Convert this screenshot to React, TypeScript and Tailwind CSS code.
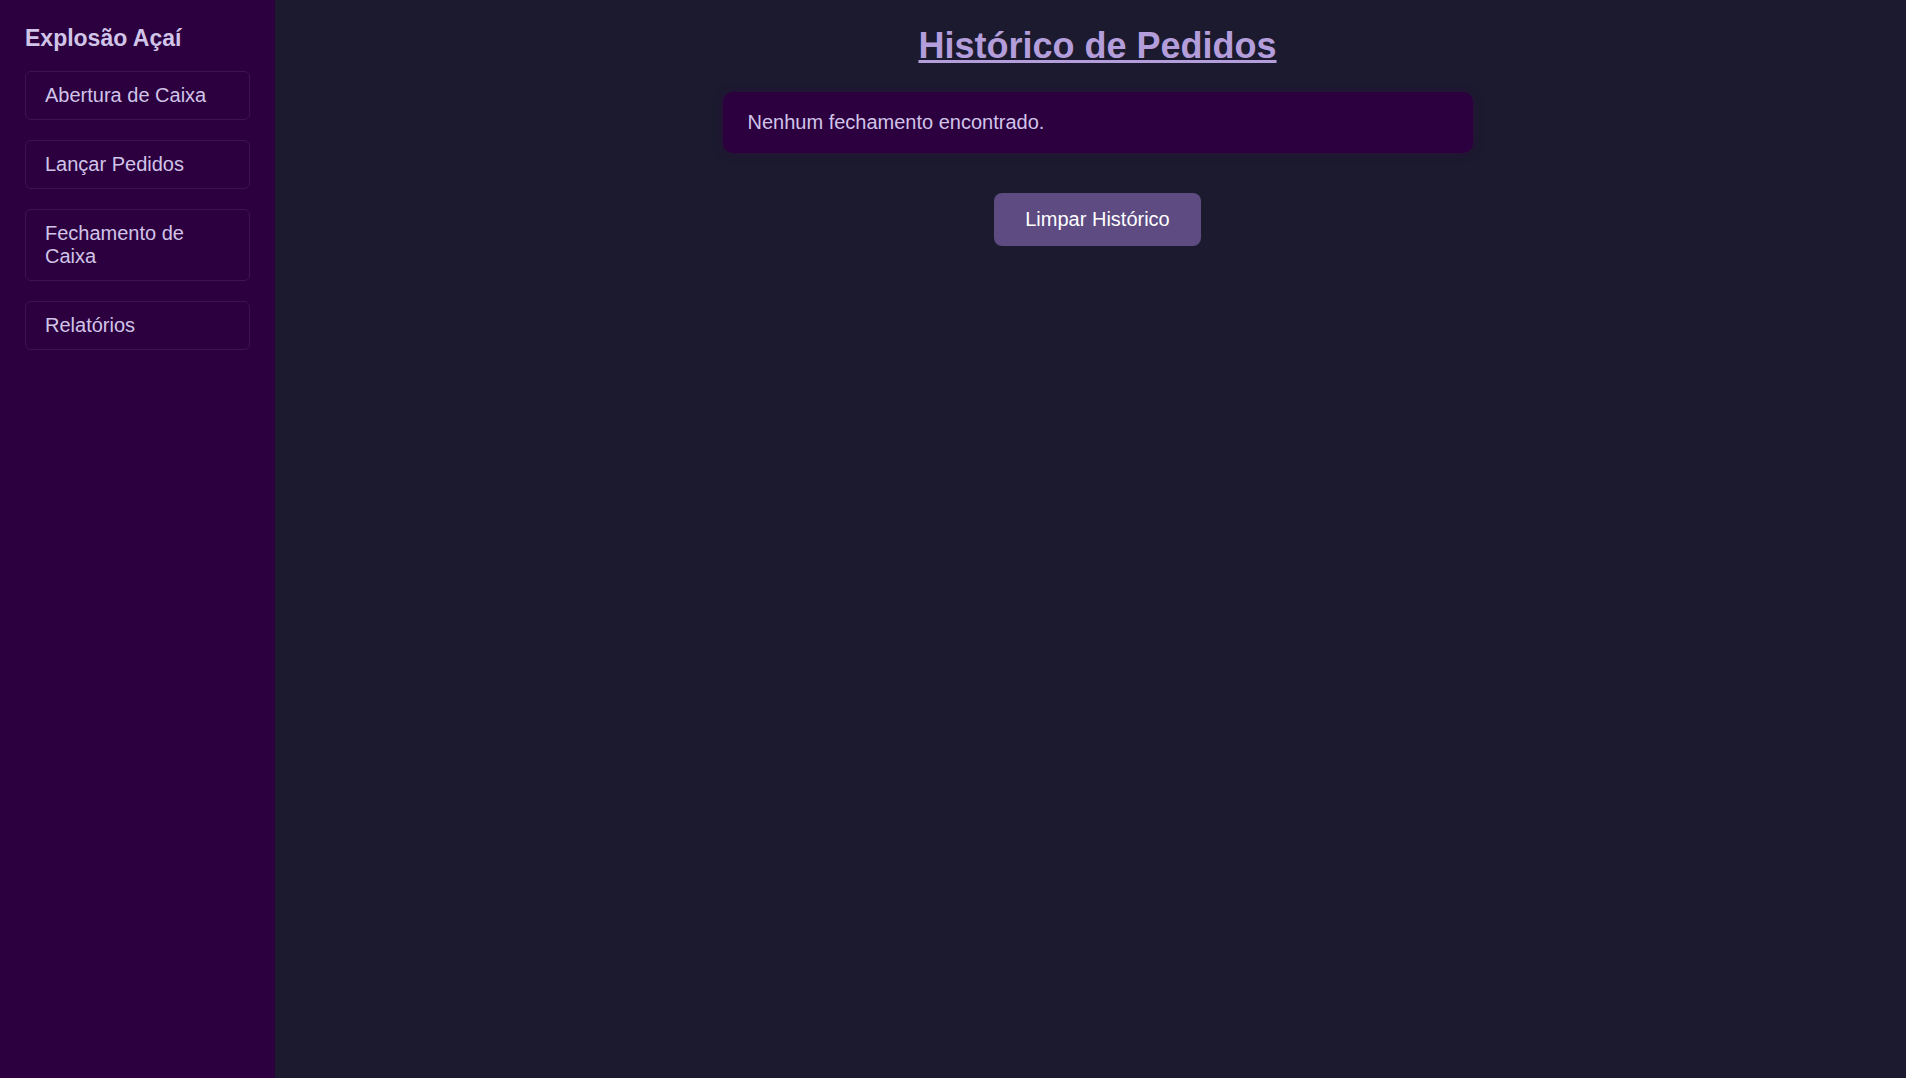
const navItems = ["Abertura de Caixa", "Lançar Pedidos", "Fechamento de Caixa", "Relatórios"];

export default function App() {
  return (
    <div
      className="flex h-screen w-full overflow-hidden"
      style={{ fontFamily: '"Liberation Sans", Arial, sans-serif' }}
    >
      <aside className="w-[275px] shrink-0 bg-[#2c003e] px-[25px] pt-[25px]">
        <h2 className="mb-[19px] text-[23px] font-bold leading-[27px] text-[#d1c4e9]">
          Explosão Açaí
        </h2>
        <nav className="flex flex-col gap-[20px]">
          {navItems.map((item) => (
            <a
              key={item}
              href="#"
              className="block rounded-[6px] border border-[#3b1450] px-[19px] py-[12px] text-[20px] leading-[23px] text-[#d1c4e9]"
            >
              {item}
            </a>
          ))}
        </nav>
      </aside>
      <main className="flex flex-1 flex-col items-center bg-[#1b1a2e] pl-[34px] pr-[20px] pt-[25px]">
        <h1 className="mb-[26px] text-[36px] font-bold leading-[41px] text-[#b39ddb] underline">
          Histórico de Pedidos
        </h1>
        <div className="w-[750px] rounded-[10px] bg-[#2c003e] px-[25px] py-[19px] text-[20px] leading-[23px] text-[#d1c4e9] shadow-[0_0_8px_rgba(60,0,80,0.5)]">
          Nenhum fechamento encontrado.
        </div>
        <button className="mt-[40px] rounded-[8px] bg-[#5d4b82] px-[31px] py-[15px] text-[20px] leading-[23px] text-white">
          Limpar Histórico
        </button>
      </main>
    </div>
  );
}
